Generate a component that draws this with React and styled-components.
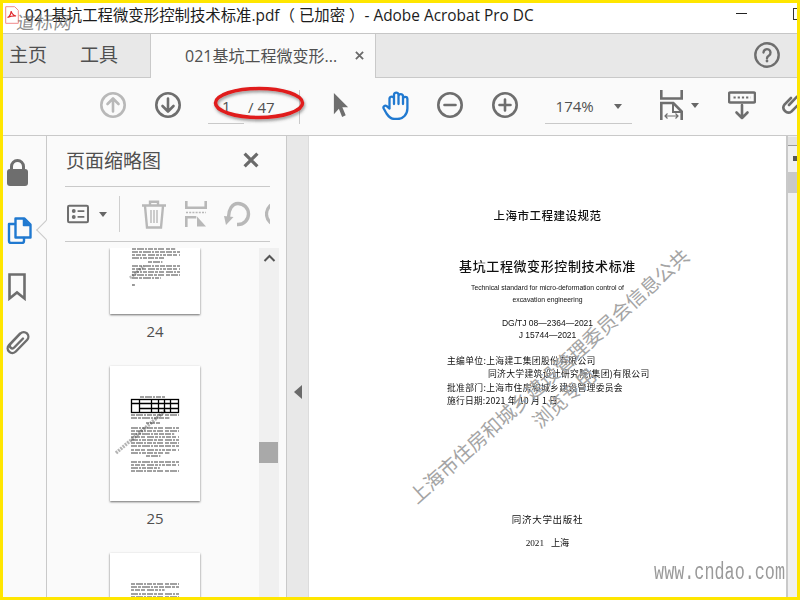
import React from "react";
import styled, { createGlobalStyle } from "styled-components";

const CJK = `"Open Sans", "Noto Sans CJK SC", sans-serif`;

const Global = createGlobalStyle`
  html, body { margin: 0; padding: 0; overflow: hidden; background: #fff; }
  * { box-sizing: border-box; }
`;

const Frame = styled.div`
  position: relative;
  width: 800px;
  height: 600px;
  border: 3px solid #ffe600;
  display: flex;
  flex-direction: column;
  overflow: hidden;
  font-family: ${CJK};
  color: #4b4b4b;
  background: #fafafa;
`;

const TitleBar = styled.div`
  height: 31px;
  flex: none;
  background: #fff;
  border-bottom: 1px solid #c6c6c6;
  display: flex;
  align-items: center;
  padding-left: 2px;
  position: relative;
`;
const PdfSlot = styled.div`
  display: flex;
  margin-top: -7px;
`;
const TitleText = styled.div`
  margin-left: 6px;
  font-size: 15.4px;
  color: #1c1c1c;
  white-space: nowrap;
  margin-top: -7px;
`;
const Minimize = styled.div`
  position: absolute;
  left: 733px;
  top: 10px;
  width: 11px;
  height: 1px;
  background: #222;
`;
const Maximize = styled.div`
  position: absolute;
  left: 790px;
  top: 5px;
  width: 11px;
  height: 12px;
  border: 1px solid #333;
`;
const SiteMark = styled.div`
  position: absolute;
  left: 14px;
  top: 7px;
  font-size: 18px;
  line-height: 24px;
  font-weight: 400;
  letter-spacing: 0.5px;
  color: rgba(95, 95, 95, 0.72);
  transform: skewX(-8deg);
  white-space: nowrap;
`;

const TabBar = styled.div`
  height: 44px;
  flex: none;
  background: #e8e8e8;
  border-bottom: 1px solid #c9c9c9;
  display: flex;
  align-items: stretch;
`;
const NavTab = styled.div`
  font-size: 19px;
  line-height: 43px;
  color: #505050;
  margin-left: ${(p) => p.$ml}px;
`;
const DocTab = styled.div`
  margin-left: 32px;
  width: 226px;
  height: 44px;
  background: #fafafa;
  border-left: 1px solid #c9c9c9;
  border-right: 1px solid #c9c9c9;
  display: flex;
  align-items: center;
  padding: 0 0 2px 34px;
  font-size: 16px;
  color: #505050;
  white-space: nowrap;
`;
const TabClose = styled.span`
  margin-left: 18px;
  display: flex;
`;
const HelpSlot = styled.div`
  margin-left: auto;
  margin-right: 17px;
  padding-bottom: 2px;
  display: flex;
  align-items: center;
`;

const Toolbar = styled.div`
  height: 58px;
  flex: none;
  background: #fafafa;
  border-bottom: 1px solid #c9c9c9;
  display: flex;
  align-items: center;
  padding: 0 0 3px 97px;
  overflow: hidden;
`;
const Tool = styled.div`
  flex: none;
  display: flex;
  margin-left: ${(p) => p.$ml || 0}px;
`;
const PageGroup = styled.div`
  position: relative;
  flex: none;
  display: flex;
  align-items: center;
  margin-left: 27px;
  font-size: 15px;
  color: #505050;
`;
const PageField = styled.div`
  width: 36px;
  height: 34px;
  border-bottom: 1px solid #c9c9c9;
  padding-left: 14px;
  line-height: 33px;
  margin-top: 3px;
`;
const PageTotal = styled.div`
  margin-left: 4px;
  margin-top: 3px;
  white-space: nowrap;
`;
const Oval = styled.svg`
  position: absolute;
  left: 5px;
  top: -2px;
  overflow: visible;
`;
const ToolSep = styled.div`
  flex: none;
  width: 1px;
  height: 34px;
  background: #c9c9c9;
  margin-left: 24px;
  margin-top: 3px;
`;
const ZoomField = styled.div`
  flex: none;
  width: 87px;
  height: 34px;
  margin-left: 27px;
  margin-top: 3px;
  border-bottom: 1px solid #c9c9c9;
  display: flex;
  align-items: center;
  padding-left: 11px;
  font-size: 15px;
  color: #505050;
`;
const Caret = styled.span`
  width: 0;
  height: 0;
  flex: none;
  border-left: 4.5px solid transparent;
  border-right: 4.5px solid transparent;
  border-top: 5px solid #666;
  margin-left: ${(p) => p.$ml || 0}px;
`;

const Main = styled.div`
  flex: 1;
  min-height: 0;
  display: flex;
`;
const Rail = styled.div`
  width: 44px;
  flex: none;
  position: relative;
  border-right: 1px solid #c9c9c9;
  background: #fafafa;
  display: flex;
  flex-direction: column;
  align-items: flex-start;
  padding: 22px 0 0 2px;
`;
const RailItem = styled.div`
  display: flex;
  margin-top: ${(p) => p.$mt || 0}px;
  margin-left: ${(p) => p.$ml || 0}px;
`;
const Notch = styled.div`
  position: absolute;
  left: 36px;
  top: 87px;
  width: 14px;
  height: 14px;
  background: #fafafa;
  border-left: 1px solid #c9c9c9;
  border-bottom: 1px solid #c9c9c9;
  transform: rotate(45deg);
`;
const Panel = styled.div`
  width: 240px;
  flex: none;
  background: #fafafa;
  border-right: 1px solid #c9c9c9;
  display: flex;
  flex-direction: column;
  min-height: 0;
`;
const PanelHead = styled.div`
  height: 51px;
  flex: none;
  margin: 0 16px 0 18px;
  border-bottom: 1px solid #c9c9c9;
  display: flex;
  align-items: center;
  justify-content: space-between;
  padding: 0 11px 2px 1px;
  font-size: 19px;
  color: #505050;
`;
const PanelTools = styled.div`
  height: 55px;
  flex: none;
  margin: 0 16px 0 18px;
  border-bottom: 1px solid #c9c9c9;
  display: flex;
  align-items: center;
  overflow: hidden;
  padding-left: 2px;
`;
const PanelSep = styled.div`
  width: 1px;
  height: 36px;
  background: #cfcfcf;
  flex: none;
  margin-left: 12px;
`;
const ThumbArea = styled.div`
  flex: 1;
  min-height: 0;
  margin-top: 6px;
  display: flex;
  overflow: hidden;
`;
const ThumbList = styled.div`
  width: 212px;
  flex: none;
  display: flex;
  flex-direction: column;
  align-items: center;
  padding-left: 4px;
  overflow: hidden;
`;
const Thumb = styled.div`
  width: 90px;
  height: ${(p) => p.$h}px;
  flex: none;
  background: #fff;
  box-shadow: 0 1px 2px rgba(60, 60, 60, 0.75);
  display: flex;
  overflow: hidden;
`;
const ThumbArt = styled.svg`
  filter: blur(0.4px);
  flex: none;
`;
const ThumbLabel = styled.div`
  height: 34px;
  flex: none;
  margin-bottom: 18px;
  line-height: 34px;
  font-size: 15px;
  color: #505050;
`;
const ListBar = styled.div`
  width: 20px;
  flex: none;
  background: #f0f0f0;
  display: flex;
  flex-direction: column;
  align-items: center;
  padding-top: 6px;
`;
const ListThumb = styled.div`
  width: 19px;
  height: 21px;
  align-self: flex-start;
  background: #a9a9a9;
  margin-top: 180px;
`;
const Gutter = styled.div`
  width: 22px;
  flex: none;
  background: #e8e8e8;
  display: flex;
  align-items: center;
  justify-content: center;
  padding-top: 50px;
  border-right: 1px solid #dcdcdc;
`;
const GutterArrow = styled.span`
  width: 0;
  height: 0;
  border-top: 7px solid transparent;
  border-bottom: 7px solid transparent;
  border-right: 8px solid #6a6a6a;
`;
const Paper = styled.div`
  flex: 1;
  position: relative;
  background: #fff;
  overflow: hidden;
  border-right: 2px solid #c9c9c9;
  display: flex;
  flex-direction: column;
  align-items: center;
  padding: 72px 0 0;
  color: #111;
`;
const Line = styled.div`
  height: ${(p) => p.$h}px;
  line-height: ${(p) => p.$h}px;
  font-size: ${(p) => p.$fs}px;
  letter-spacing: ${(p) => p.$ls || 0}px;
  margin-top: ${(p) => p.$mt || 0}px;
  font-weight: ${(p) => p.$w || 400};
  font-family: ${(p) => p.$sans ? `"Liberation Sans", "Noto Sans CJK SC", sans-serif` : `"Noto Sans CJK SC", sans-serif`};
  white-space: nowrap;
  flex: none;
  filter: blur(0.35px);
`;
const Editors = styled.div`
  align-self: flex-start;
  margin: 12px 0 0 138px;
  display: flex;
  flex-direction: column;
`;
const EditorLine = styled(Line)`
  margin-left: ${(p) => p.$indent || 0}px;
`;
const SerifLine = styled(Line)`
  font-family: "Liberation Serif", "Noto Sans CJK SC", serif;
`;
const Stamp = styled.div`
  position: absolute;
  left: ${(p) => p.$x}px;
  top: ${(p) => p.$y}px;
  transform: translate(-50%, -50%) rotate(-42deg);
  font-family: "Liberation Serif", "Noto Sans CJK SC", serif;
  font-size: 19.4px;
  line-height: 20px;
  font-weight: 400;
  color: #a4a4a4;
  white-space: nowrap;
`;
const SiteUrl = styled.div`
  position: absolute;
  right: 1px;
  bottom: 6px;
  font-family: "Liberation Mono", monospace;
  font-size: 16.8px;
  line-height: 24px;
  color: #9a9a9a;
  white-space: nowrap;
  transform: scaleY(1.45);
  transform-origin: bottom right;
`;
const PageBar = styled.div`
  width: 9px;
  flex: none;
  background: #f0f0f0;
  display: flex;
  flex-direction: column;
`;
const PageBarButton = styled.div`
  height: 9px;
  margin-top: 1px;
  background: #e2e2e2;
  border-bottom: 1px solid #999;
`;
const PageBarArrow = styled.div`
  width: 4px;
  height: 5px;
  margin: 10px 0 0 5px;
  background: #555;
`;
const PageBarThumb = styled.div`
  height: 21px;
  margin-top: 11px;
  background: #c8c8c8;
`;

const G = "#6e6e6e";
const L = "#b8b8b8";
const B = "#2079d0";

const Circle = ({ size = 26, c = G, children }) => (
  <svg width={size} height={size} viewBox="0 0 26 26" fill="none" stroke={c} strokeWidth="2.6" strokeLinecap="round" strokeLinejoin="round">
    <circle cx="13" cy="13" r="11.7" />
    {children}
  </svg>
);

const PdfIcon = () => (
  <svg width="14" height="18" viewBox="0 0 14 18" fill="none">
    <path d="M.7.7h9l3.6 3.6v13H.7z" fill="#fff" stroke="#f08a8a" strokeWidth="1" />
    <path d="M2.5 11.5c2-1 3.4-3.5 3.6-6.3.8 2.8 2 4.3 5 4.8-3-.2-5.6.3-8.600 1.500z" fill="none" stroke="#e0252b" strokeWidth="1.2" />
  </svg>
);

const Cross = ({ s, w = 2, c = "#6a6a6a" }) => (
  <svg width={s} height={s} viewBox="0 0 10 10" stroke={c} strokeWidth={w} strokeLinecap="butt">
    <path d="M1 1l8 8M9 1l-8 8" />
  </svg>
);

const Hand = () => (
  <svg width="27" height="29" viewBox="0 0 27 29" fill="none" stroke={B} strokeWidth="2.300" strokeLinecap="round" strokeLinejoin="round">
    <path d="M7.500 17V7.500a2.300 2.300 0 0 1 4.500 0M12 13V3.500a2.300 2.300 0 0 1 4.500 0V13M16.500 4v-.500M16.500 13V5a2.300 2.300 0 0 1 4.500 0v8M21 13V8a2.200 2.200 0 0 1 4.400 0v9.500C25.400 23.500 21 28 15.500 28H12.500C8.500 28 6.500 25.500 4.500 22.500L1.700 17.500C.7 15.500 3 13.800 4.700 15.200L7.500 17.500M12 7.500V13" />
  </svg>
);

const FitIcon = () => (
  <svg width="23" height="30" viewBox="0 0 23 30" fill="none" stroke={G} strokeWidth="2.600">
    <path d="M1.300 0v8.500h20.400V0" />
    <path d="M1.300 30V13h12l8.400 8.500V30" />
    <path d="M13 13v9h8.700" strokeWidth="2" />
    <path d="M5 26h13M7.500 23.500l-2.500 2.500 2.500 2.500M15.500 23.500l2.500 2.500-2.500 2.500" strokeWidth="1.200" />
  </svg>
);

const ReadIcon = () => (
  <svg width="28" height="29" viewBox="0 0 28 29" fill="none">
    <rect x="1" y="1.500" width="26" height="10" rx="1.500" stroke={G} strokeWidth="2.500" />
    <path d="M5.500 6.500h17" stroke={G} strokeWidth="2.200" strokeDasharray="2.200 2" />
    <path d="M14 14v13M8.500 21.500L14 27l5.500-5.500" stroke={G} strokeWidth="2.600" strokeLinecap="round" strokeLinejoin="round" />
  </svg>
);

const LinkIcon = () => (
  <svg width="32" height="32" viewBox="0 0 32 32" fill="none" stroke={G} strokeWidth="2.600" strokeLinecap="round">
    <path d="M12 9l-6.500 6.500a5 5 0 0 0 7 7L22 13a3.300 3.300 0 0 0-4.700-4.700L10 16" />
  </svg>
);

const LockIcon = () => (
  <svg width="21" height="28" viewBox="0 0 21 28">
    <path d="M4.500 13V8.500a6 6 0 0 1 12 0V13" fill="none" stroke={G} strokeWidth="3" />
    <rect x="0" y="11" width="21" height="17" rx="3" fill={G} />
  </svg>
);

const PagesIcon = () => (
  <svg width="25" height="27" viewBox="0 0 25 27" fill="none" stroke={B} strokeWidth="2.400" strokeLinejoin="round">
    <path d="M8.500 1.500h9l6 6v13h-15z" />
    <path d="M16.500 1.500v7h7" fill={B} stroke={B} strokeWidth="1.500" />
    <path d="M8 7H2v17a2 2 0 0 0 2 2h11a2 2 0 0 0 2-2V21" strokeLinecap="round" />
  </svg>
);

const BookmarkIcon = () => (
  <svg width="18" height="28" viewBox="0 0 18 28" fill="none" stroke={G} strokeWidth="2.600" strokeLinejoin="miter">
    <path d="M1.500 1.500h15v24L9 19.500 1.500 25.500z" />
  </svg>
);

const ClipIcon = () => (
  <svg width="25" height="27" viewBox="0 0 25 27" fill="none" stroke={G} strokeWidth="2.400" strokeLinecap="round">
    <path d="M15 5.500L4 17a4.700 4.700 0 0 0 6.800 6.500L22 12a4.600 4.600 0 0 0-6.600-6.500L5.500 16a2.500 2.500 0 0 0 3.700 3.500L18 10.500" />
  </svg>
);

const ViewIcon = () => (
  <svg width="26" height="22" viewBox="0 0 26 22" fill="none">
    <rect x="1.200" y="1.200" width="23.600" height="19.600" rx="1.500" stroke={G} strokeWidth="2.400" />
    <circle cx="8" cy="7.500" r="2.300" fill={G} />
    <circle cx="8" cy="14.500" r="2.300" fill={G} />
    <path d="M12.500 7.500h8M12.500 14.500h8" stroke={G} strokeWidth="2" />
  </svg>
);

const TrashIcon = () => (
  <svg width="26" height="29" viewBox="0 0 26 29" fill="none" stroke={L} strokeWidth="2.400">
    <path d="M1 5.500h24M9 5V1.700h8V5" />
    <path d="M4 6l2 21.500h14L22 6" />
    <path d="M10 10v13M13 10v13M16 10v13" strokeWidth="1.400" />
  </svg>
);

const SplitIcon = () => (
  <svg width="22" height="26" viewBox="0 0 22 26" fill="none" stroke={L} strokeWidth="2.600">
    <path d="M1.300 0v6.700h19.400V0" />
    <path d="M1 11.500h20" strokeDasharray="2 1.200" strokeWidth="1.600" />
    <path d="M1.300 26V16.300h10" />
    <path d="M12 15.500L21 25.500H12z" fill={L} stroke="none" />
  </svg>
);

const RotateIcon = () => (
  <svg width="28" height="28" viewBox="0 0 28 28" fill="none" stroke={L} strokeWidth="3.400">
    <path d="M5.500 17C5.500 10 9 3.500 15 3.500a10.500 10.500 0 0 1 0 21h-1" />
    <path d="M1 16l9.500 1L3 25z" fill={L} stroke="none" />
  </svg>
);

const HalfCircle = () => (
  <svg width="5" height="26" viewBox="0 0 5 26" fill="none" stroke={L} strokeWidth="3.200">
    <circle cx="12.500" cy="13" r="11" />
  </svg>
);

const rowDash = ["4 1 7 1 2 1 5 1 3 1 6 2", "6 1 3 1 8 1 2 1 4 1 5 1", "3 1 5 1 4 2 7 1 3 1 2 1", "7 1 2 1 4 1 6 1 3 1 5 2"];

const Rows = ({ x = 21, w = 48, ys }) => (
  <g stroke="#111" strokeWidth="1.100" opacity="0.78">
    {ys.map(([y, f = 1, dx = 0], i) => (
      <path key={i} d={`M${x + dx} ${y}h${w * f}`} strokeDasharray={rowDash[i % 4]} />
    ))}
  </g>
);

const Thumb24 = () => (
  <ThumbArt width="90" height="66" viewBox="0 0 90 66">
    <path d="M20 30l14-12" stroke="#bbb" strokeWidth="3" strokeDasharray="2 1" />
    <Rows x={22} ys={[[1, 0.9], [4, 1], [7, 1], [10, 0.7], [14, 0.3, 16], [18, 1], [21, 1], [24, 1], [27, 1], [30, 0.6], [37, 0.06]]} />
  </ThumbArt>
);

const Thumb25 = () => {
  const cols = [21, 29, 41, 48, 54, 60, 69];
  return (
    <ThumbArt width="90" height="135" viewBox="0 0 90 135">
      <Rows x={30} w={26} ys={[[31, 1]]} />
      <path d="M6 87L56 44" stroke="#b5b5b5" strokeWidth="3.500" strokeDasharray="2 1" />
      <g stroke="#000" fill="none" strokeWidth="1.300">
        <rect x="21.500" y="33.500" width="47" height="13" />
        <path d="M21 37.500h48M29 42.500h40" />
        {cols.slice(1, -1).map((x) => (
          <path key={x} d={`M${x + 0.500} 33v14`} />
        ))}
      </g>
      <Rows ys={[[49], [52, 0.8], [57, 0.3, 15], [62], [65], [68, 0.9], [71], [74], [77], [80], [84], [87, 0.8], [90, 0.3, 15], [96], [99], [102, 0.6], [105]]} />
    </ThumbArt>
  );
};

const Thumb26 = () => (
  <ThumbArt width="90" height="44" viewBox="0 0 90 44">
    <Rows ys={[[31], [34], [37, 0.7], [41], [44]]} />
  </ThumbArt>
);

export default function App() {
  return (
    <>
      <Global />
      <Frame>
        <TitleBar>
          <PdfSlot><PdfIcon /></PdfSlot>
          <TitleText>021基坑工程微变形控制技术标准.pdf（ 已加密 ）- Adobe Acrobat Pro DC</TitleText>
          <SiteMark>道标网</SiteMark>
          <Minimize />
          <Maximize />
        </TitleBar>
        <TabBar>
          <NavTab $ml={6}>主页</NavTab>
          <NavTab $ml={33}>工具</NavTab>
          <DocTab>
            021基坑工程微变形...
            <TabClose>
              <Cross s={9} />
            </TabClose>
          </DocTab>
          <HelpSlot>
            <svg width="26" height="26" viewBox="0 0 26 26" fill="none" stroke={G} strokeWidth="2.400">
              <circle cx="13" cy="13" r="11.700" />
              <path d="M9.500 10.500a3.500 3.500 0 1 1 5.500 3c-1.300.8-2 1.300-2 2.800" strokeLinecap="round" />
              <circle cx="13" cy="19" r="1.400" fill={G} stroke="none" />
            </svg>
          </HelpSlot>
        </TabBar>
        <Toolbar>
          <Tool>
            <Circle c={L}>
              <path d="M13 19.500V7M7.500 12L13 6.500l5.500 5.500" />
            </Circle>
          </Tool>
          <Tool $ml={29}>
            <Circle>
              <path d="M13 6.500V19M7.500 14l5.500 5.500 5.500-5.500" />
            </Circle>
          </Tool>
          <PageGroup>
            <PageField>1</PageField>
            <PageTotal>/ 47</PageTotal>
            <Oval width="92" height="36" viewBox="0 0 92 36" fill="none">
              <defs>
                <filter id="ovalShadow" x="-10%" y="-20%" width="120%" height="150%">
                  <feDropShadow dx="1" dy="2" stdDeviation="1.500" floodColor="#555" floodOpacity="0.6" />
                </filter>
              </defs>
              <ellipse cx="46" cy="18" rx="43.500" ry="14.500" stroke="#e01a1a" strokeWidth="3.600" filter="url(#ovalShadow)" />
            </Oval>
          </PageGroup>
          <ToolSep />
          <Tool $ml={33}>
            <svg width="16" height="26" viewBox="0 0 18 28" preserveAspectRatio="none">
              <path d="M1 1l16 15.500h-6.500l3.800 8.500-4 1.800-3.700-8.800L1 24z" fill={G} />
            </svg>
          </Tool>
          <Tool $ml={33}>
            <Hand />
          </Tool>
          <Tool $ml={28}>
            <Circle>
              <path d="M7.500 13h11" />
            </Circle>
          </Tool>
          <Tool $ml={29}>
            <Circle>
              <path d="M7.500 13h11M13 7.500v11" />
            </Circle>
          </Tool>
          <ZoomField>
            174%
            <Caret $ml={20} />
          </ZoomField>
          <Tool $ml={28}>
            <FitIcon />
          </Tool>
          <Caret $ml={8} />
          <Tool $ml={29}>
            <ReadIcon />
          </Tool>
          <Tool $ml={23}>
            <LinkIcon />
          </Tool>
        </Toolbar>
        <Main>
          <Rail>
            <Notch />
            <RailItem $ml={2}><LockIcon /></RailItem>
            <RailItem $mt={31} $ml={2}><PagesIcon /></RailItem>
            <RailItem $mt={29} $ml={3}><BookmarkIcon /></RailItem>
            <RailItem $mt={27} $ml={0}><ClipIcon /></RailItem>
          </Rail>
          <Panel>
            <PanelHead>
              页面缩略图
              <Cross s={16} w={2} />
            </PanelHead>
            <PanelTools>
              <ViewIcon />
              <Caret $ml={10} />
              <PanelSep />
              <Tool $ml={21}><TrashIcon /></Tool>
              <Tool $ml={18}><SplitIcon /></Tool>
              <Tool $ml={16}><RotateIcon /></Tool>
              <Tool $ml={14}><HalfCircle /></Tool>
            </PanelTools>
            <ThumbArea>
              <ThumbList>
                <Thumb $h={66}><Thumb24 /></Thumb>
                <ThumbLabel>24</ThumbLabel>
                <Thumb $h={135}><Thumb25 /></Thumb>
                <ThumbLabel>25</ThumbLabel>
                <Thumb $h={135}><Thumb26 /></Thumb>
              </ThumbList>
              <ListBar>
                <svg width="13" height="8" viewBox="0 0 13 8" fill="none" stroke="#555" strokeWidth="2">
                  <path d="M1.500 7l5-5 5 5" />
                </svg>
                <ListThumb />
              </ListBar>
            </ThumbArea>
          </Panel>
          <Gutter>
            <GutterArrow />
          </Gutter>
          <Paper>
            <Line $h={14} $fs={11.500} $ls={0.500} $w={500}>上海市工程建设规范</Line>
            <Line $h={16} $fs={13} $ls={0.600} $mt={36} $w={500}>基坑工程微变形控制技术标准</Line>
            <Line $h={12} $fs={6.800} $mt={8} $sans>Technical standard for micro-deformation control of</Line>
            <Line $h={12} $fs={6.800} $sans>excavation engineering</Line>
            <Line $h={12} $fs={8.500} $mt={11} $sans>DG/TJ 08—2364—2021</Line>
            <Line $h={13} $fs={8.500} $sans>J 15744—2021</Line>
            <Editors>
              <EditorLine $h={13} $fs={8.800} $ls={0.320}>主编单位:上海建工集团股份有限公司</EditorLine>
              <EditorLine $h={14} $fs={8.800} $ls={0.320} $indent={41}>同济大学建筑设计研究院(集团)有限公司</EditorLine>
              <EditorLine $h={13} $fs={8.800} $ls={0.320}>批准部门:上海市住房和城乡建设管理委员会</EditorLine>
              <EditorLine $h={13} $fs={8.800} $ls={0.150}>施行日期:2021 年 10 月 1 日</EditorLine>
            </Editors>
            <Line $h={12} $fs={9.500} $ls={0.700} $mt={106}>同济大学出版社</Line>
            <SerifLine $h={12} $fs={9.200} $mt={12}>2021&nbsp;&nbsp;&nbsp;上海</SerifLine>
            <Stamp $x={241} $y={241}>上海市住房和城乡建设管理委员会信息公共</Stamp>
            <Stamp $x={256} $y={263}>浏览专用</Stamp>
            <SiteUrl>www.cndao.com</SiteUrl>
          </Paper>
          <PageBar>
            <PageBarButton />
            <PageBarArrow />
            <PageBarThumb />
          </PageBar>
        </Main>
      </Frame>
    </>
  );
}
